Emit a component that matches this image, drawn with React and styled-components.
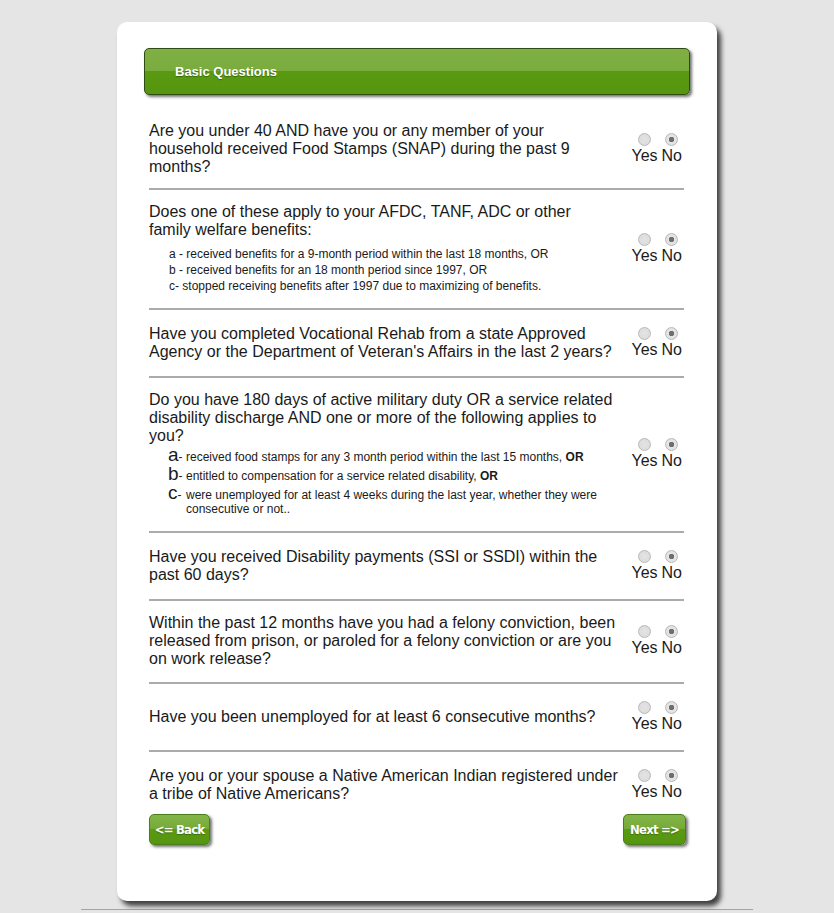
import React from "react";
import styled, { createGlobalStyle } from "styled-components";

const Global = createGlobalStyle`
  html, body { margin: 0; padding: 0; background: #e5e5e5; }
  body { font-family: "Liberation Sans", Arial, sans-serif; color: #1a1a1a; }
`;

const Wrapper = styled.div`
  width: 672px;
  margin: 0 auto;
  padding: 22px 0 8px;
  border-bottom: 1px solid #d39868;
`;

const Card = styled.div`
  width: 600px;
  box-sizing: border-box;
  margin: 0 auto;
  background: #fff;
  border-radius: 10px;
  padding: 26px 27px 56px;
  box-shadow: 4px 5px 5px rgba(0, 0, 0, 0.72);
`;

const Header = styled.div`
  height: 47px;
  box-sizing: border-box;
  border: 1px solid #2f4d12;
  border-radius: 5px;
  background: linear-gradient(to bottom, #80b045 0%, #7aab3d 49%, #5a9a12 50%, #56950f 100%);
  box-shadow: 2px 2px 3px rgba(0, 0, 0, 0.55);
  display: flex;
  align-items: center;
  padding-left: 30px;
  color: #fff;
  font-weight: bold;
  font-size: 13px;
  text-shadow: 0 1px 1px rgba(0, 0, 0, 0.35);
  margin-bottom: 14px;
`;

const List = styled.div`
  padding: 0 6px 0 5px;
`;

const Row = styled.div`
  display: flex;
  align-items: center;
  padding: 13px 0 14px;
  border-bottom: 2px solid #ababab;
  &:first-child { padding-bottom: 12px; }
  &:last-child { padding-bottom: 10px; border-bottom: none; }
`;

const Question = styled.div`
  flex: 1;
  font-size: 16px;
  line-height: 18px;
  white-space: nowrap;
`;

const SubList = styled.div`
  margin: 7px 0 0 20px;
  font-size: 12px;
  line-height: 16px;
`;

const LetterList = styled.div`
  margin: 1px 0 1px 19px;
`;

const LetterItem = styled.div`
  display: flex;
  align-items: baseline;
  line-height: 14px;
  min-height: 19px;
`;

const Letter = styled.span`
  width: 18px;
  flex: none;
  font-size: 19px;
  line-height: 14px;
  span { font-size: 12px; }
`;

const LetterText = styled.div`
  font-size: 12px;
  line-height: 14px;
  padding-top: 4px;
  b { font-weight: bold; }
`;

const Choices = styled.div`
  display: flex;
  gap: 4px;
  min-height: 39px;
  align-items: center;
  margin-right: 2px;
`;

const Option = styled.label`
  display: flex;
  flex-direction: column;
  align-items: center;
  font-size: 16px;
  line-height: 18px;
  color: #1a1a1a;
`;

const Radio = styled.input.attrs({ type: "radio" })`
  appearance: none;
  -webkit-appearance: none;
  margin: 0 0 1px;
  width: 13px;
  height: 13px;
  border-radius: 50%;
  border: 1px solid #b9b9b9;
  background: radial-gradient(circle, #e4e4e4 0%, #d9d9d9 100%);
  box-sizing: border-box;
  &:checked {
    background: radial-gradient(circle, #6e6e6e 0 2.5px, #e6e6e6 3px, #dcdcdc 100%);
  }
`;

const ButtonBar = styled.div`
  display: flex;
  justify-content: space-between;
  padding: 0 4px 0 5px;
`;

const NavButton = styled.button`
  height: 31px;
  width: ${(p) => p.$w}px;
  border: 1px solid #4b7d1c;
  border-radius: 5px;
  background: linear-gradient(to bottom, #82b548 0%, #76aa37 49%, #5a9a12 50%, #569510 100%);
  box-shadow: 2px 2px 3px rgba(0, 0, 0, 0.55);
  color: #fff;
  font-family: "DejaVu Sans Condensed", "Liberation Sans", sans-serif;
  font-weight: bold;
  font-size: 13px;
  letter-spacing: -0.8px;
  text-shadow: 0 1px 1px rgba(0, 0, 0, 0.3);
  padding: 0;
  cursor: pointer;
`;

function YesNo({ name }) {
  return (
    <Choices>
      <Option>
        <Radio name={name} disabled />
        Yes
      </Option>
      <Option>
        <Radio name={name} disabled defaultChecked />
        No
      </Option>
    </Choices>
  );
}

const questions = [
  {
    lines: [
      "Are you under 40 AND have you or any member of your",
      "household received Food Stamps (SNAP) during the past 9",
      "months?",
    ],
  },
  {
    lines: ["Does one of these apply to your AFDC, TANF, ADC or other", "family welfare benefits:"],
    sub: [
      "a - received benefits for a 9-month period within the last 18 months, OR",
      "b - received benefits for an 18 month period since 1997, OR",
      "c- stopped receiving benefits after 1997 due to maximizing of benefits.",
    ],
  },
  {
    lines: [
      "Have you completed Vocational Rehab from a state Approved",
      "Agency or the Department of Veteran's Affairs in the last 2 years?",
    ],
  },
  {
    lines: [
      "Do you have 180 days of active military duty OR a service related",
      "disability discharge AND one or more of the following applies to",
      "you?",
    ],
    letters: [
      { l: "a", t: ["received food stamps for any 3 month period within the last 15 months, "], bold: "OR" },
      { l: "b", t: ["entitled to compensation for a service related disability, "], bold: "OR" },
      {
        l: "c",
        t: ["were unemployed for at least 4 weeks during the last year, whether they were", "consecutive or not.."],
      },
    ],
  },
  {
    lines: ["Have you received Disability payments (SSI or SSDI) within the", "past 60 days?"],
  },
  {
    lines: [
      "Within the past 12 months have you had a felony conviction, been",
      "released from prison, or paroled for a felony conviction or are you",
      "on work release?",
    ],
  },
  { lines: ["Have you been unemployed for at least 6 consecutive months?"] },
  {
    lines: ["Are you or your spouse a Native American Indian registered under", "a tribe of Native Americans?"],
  },
];

export default function App() {
  return (
    <>
      <Global />
      <Wrapper>
        <Card>
          <Header>Basic Questions</Header>
          <List>
            {questions.map((q, i) => (
              <Row key={i}>
                <Question>
                  {q.lines.map((l, j) => (
                    <div key={j}>{l}</div>
                  ))}
                  {q.sub && (
                    <SubList>
                      {q.sub.map((s, j) => (
                        <div key={j}>{s}</div>
                      ))}
                    </SubList>
                  )}
                  {q.letters && (
                    <LetterList>
                      {q.letters.map((it, j) => (
                        <LetterItem key={j}>
                          <Letter>
                            {it.l}
                            <span>-</span>
                          </Letter>
                          <LetterText>
                            {it.t.map((t, k) => (
                              <div key={k}>
                                {t}
                                {k === 0 && it.bold ? <b>{it.bold}</b> : null}
                              </div>
                            ))}
                          </LetterText>
                        </LetterItem>
                      ))}
                    </LetterList>
                  )}
                </Question>
                <YesNo name={`q${i}`} />
              </Row>
            ))}
          </List>
          <ButtonBar>
            <NavButton $w={61}>&lt;= Back</NavButton>
            <NavButton $w={63}>Next =&gt;</NavButton>
          </ButtonBar>
        </Card>
      </Wrapper>
    </>
  );
}
